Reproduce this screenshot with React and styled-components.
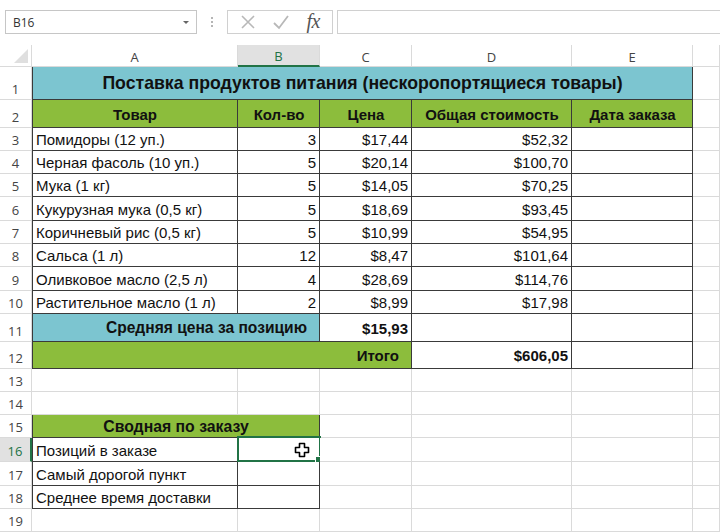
import React from "react";
import styled, { createGlobalStyle } from "styled-components";

const GlobalStyle = createGlobalStyle`
  html, body {
    margin: 0;
    padding: 0;
    background: #fff;
    overflow: hidden;
  }
  * {
    box-sizing: border-box;
  }
`;

const Page = styled.div`
  width: 720px;
  height: 532px;
  background: #fff;
  overflow: hidden;
  font-family: "Liberation Sans", Arial, sans-serif;
`;

const Toolbar = styled.div`
  height: 45px;
  display: flex;
  align-items: flex-start;
  padding: 10px 0 0 5px;
`;

const NameBox = styled.div`
  width: 192px;
  height: 24px;
  border: 1px solid #c6c6c6;
  display: flex;
  align-items: center;
  justify-content: space-between;
  padding: 0 7px 0 7px;
  font-family: "Open Sans", "Noto Sans", sans-serif;
  font-size: 12px;
  color: #333;
`;

const Caret = styled.span`
  width: 0;
  height: 0;
  border-left: 3px solid transparent;
  border-right: 3px solid transparent;
  border-top: 3px solid #666;
  margin-top: 1px;
`;

const Grip = styled.div`
  width: 30px;
  height: 24px;
  display: flex;
  flex-direction: column;
  align-items: center;
  justify-content: center;
  gap: 2px;
  & span {
    width: 2px;
    height: 2px;
    background: #b5b5b5;
  }
`;

const FxButtons = styled.div`
  width: 106px;
  height: 24px;
  border: 1px solid #d0d0d0;
  display: flex;
  align-items: center;
  justify-content: space-around;
  padding: 0 4px;
  color: #b4b4b4;
`;

const FxLabel = styled.span`
  font-family: "Liberation Serif", "Times New Roman", serif;
  font-style: italic;
  font-size: 20px;
  line-height: 20px;
  color: #555;
  letter-spacing: -0.5px;
  margin-top: -2px;
`;

const FormulaInput = styled.div`
  flex: 1;
  height: 24px;
  margin-left: 4px;
  border-top: 1px solid #d0d0d0;
  border-bottom: 1px solid #d0d0d0;
  border-left: 1px solid #d0d0d0;
`;

const Sheet = styled.div`
  display: grid;
  grid-template-columns: 32px 206px 82px 92px 160px 121px 1fr;
  grid-template-rows:
    22px 33px 28px 23px 23px 23px 24px 23px 23px 24px 23px
    28px 27px 23px 23px 23px 24px 24px 23px 23px;
`;

const Corner = styled.div`
  border-right: 1px solid #dadada;
  border-bottom: 1px solid #dadada;
  position: relative;
  &::after {
    content: "";
    position: absolute;
    right: 3px;
    bottom: 3px;
    width: 0;
    height: 0;
    border-left: 14px solid transparent;
    border-bottom: 14px solid #dfdfdf;
  }
`;

const ColHead = styled.div`
  display: flex;
  align-items: center;
  justify-content: center;
  padding-top: 2px;
  font-family: "Open Sans", "Noto Sans", sans-serif;
  font-size: 13px;
  color: ${(p) => (p.$active ? "#217346" : "#444")};
  background: ${(p) => (p.$active ? "#e1e1e1" : "#fff")};
  border-right: 1px solid #dadada;
  border-bottom: ${(p) => (p.$active ? "2px solid #217346" : "1px solid #dadada")};
`;

const RowHead = styled.div`
  display: flex;
  align-items: flex-end;
  justify-content: center;
  padding-bottom: 1px;
  font-family: "Open Sans", "Noto Sans", sans-serif;
  font-size: 13px;
  color: ${(p) => (p.$active ? "#217346" : "#444")};
  background: ${(p) => (p.$active ? "#e1e1e1" : "#fff")};
  border-bottom: 1px solid #dadada;
  border-right: ${(p) => (p.$active ? "2px solid #217346" : "1px solid #dadada")};
`;

const DARK = "#3a3a3a";
const GRID = "#dadada";

const Cell = styled.div`
  position: relative;
  grid-column: span ${(p) => p.$span || 1};
  display: flex;
  align-items: center;
  justify-content: ${(p) =>
    p.$align === "right" ? "flex-end" : p.$align === "center" ? "center" : "flex-start"};
  padding: 1px ${(p) => p.$pr ?? 3}px 0 4px;
  font-size: ${(p) => p.$size || 15}px;
  font-weight: ${(p) => (p.$bold ? 700 : 400)};
  color: #111;
  white-space: nowrap;
  background: ${(p) => p.$bg || "#fff"};
  border-right: 1px solid ${(p) => (p.$br ? DARK : GRID)};
  border-bottom: 1px solid ${(p) => (p.$bb ? DARK : GRID)};
  box-shadow: ${(p) => (p.$bl ? `inset 1px 0 0 ${DARK}` : "none")};
`;

const Selection = styled.div`
  position: absolute;
  left: -1px;
  top: -2px;
  right: -2px;
  bottom: -1px;
  border: 2px solid #217346;
  pointer-events: none;
  &::after {
    content: "";
    position: absolute;
    right: -5px;
    bottom: -5px;
    width: 7px;
    height: 7px;
    background: #217346;
    border: 1px solid #fff;
  }
`;

const Cursor = styled.svg`
  position: absolute;
  left: 56px;
  top: 4px;
`;

const TEAL = "#7cc5d0";
const GREEN = "#8cbd3c";

const items = [
  ["Помидоры (12 уп.)", "3", "$17,44", "$52,32"],
  ["Черная фасоль (10 уп.)", "5", "$20,14", "$100,70"],
  ["Мука (1 кг)", "5", "$14,05", "$70,25"],
  ["Кукурузная мука (0,5 кг)", "5", "$18,69", "$93,45"],
  ["Коричневый рис (0,5 кг)", "5", "$10,99", "$54,95"],
  ["Сальса (1 л)", "12", "$8,47", "$101,64"],
  ["Оливковое масло (2,5 л)", "4", "$28,69", "$114,76"],
  ["Растительное масло (1 л)", "2", "$8,99", "$17,98"],
];

const heads = ["Товар", "Кол-во", "Цена", "Общая стоимость", "Дата заказа"];

const summary = ["Позиций в заказе", "Самый дорогой пункт", "Среднее время доставки"];

function EmptyRow({ n }) {
  return (
    <>
      <RowHead>{n}</RowHead>
      <Cell />
      <Cell />
      <Cell />
      <Cell />
      <Cell />
      <Cell />
    </>
  );
}

export default function App() {
  return (
    <Page>
      <GlobalStyle />
      <Toolbar>
        <NameBox>
          B16
          <Caret />
        </NameBox>
        <Grip>
          <span />
          <span />
          <span />
        </Grip>
        <FxButtons>
          <svg width="16" height="16" viewBox="0 0 16 16">
            <path d="M2 2 L14 14 M14 2 L2 14" stroke="#b8b8b8" strokeWidth="1.6" fill="none" />
          </svg>
          <svg width="18" height="16" viewBox="0 0 18 16">
            <path d="M2 9 L7 14 L16 2" stroke="#b8b8b8" strokeWidth="1.8" fill="none" />
          </svg>
          <FxLabel>fx</FxLabel>
        </FxButtons>
        <FormulaInput />
      </Toolbar>

      <Sheet>
        <Corner />
        <ColHead>A</ColHead>
        <ColHead $active>B</ColHead>
        <ColHead>C</ColHead>
        <ColHead>D</ColHead>
        <ColHead>E</ColHead>
        <ColHead />

        <RowHead>1</RowHead>
        <Cell $span={5} $bg={TEAL} $bold $size={17.7} $align="center" $bb $br $bl>
          Поставка продуктов питания (нескоропортящиеся товары)
        </Cell>
        <Cell />

        <RowHead>2</RowHead>
        {heads.map((h, i) => (
          <Cell key={h} $bg={GREEN} $bold $align="center" $bb $br $bl={i === 0}>
            {h}
          </Cell>
        ))}
        <Cell />

        {items.map((row, i) => (
          <React.Fragment key={row[0]}>
            <RowHead>{i + 3}</RowHead>
            <Cell $bb $br $bl>{row[0]}</Cell>
            <Cell $bb $br $align="right">{row[1]}</Cell>
            <Cell $bb $br $align="right">{row[2]}</Cell>
            <Cell $bb $br $align="right">{row[3]}</Cell>
            <Cell $bb $br />
            <Cell />
          </React.Fragment>
        ))}

        <RowHead>11</RowHead>
        <Cell $span={2} $bg={TEAL} $bold $size={15.6} $align="right" $pr={12} $bb $br $bl>
          Средняя цена за позицию
        </Cell>
        <Cell $bold $align="right" $bb $br>$15,93</Cell>
        <Cell $bb $br />
        <Cell $bb $br />
        <Cell />

        <RowHead>12</RowHead>
        <Cell $span={3} $bg={GREEN} $bold $align="right" $pr={12} $bb $br $bl>
          Итого
        </Cell>
        <Cell $bold $align="right" $bb $br>$606,05</Cell>
        <Cell $bb $br />
        <Cell />

        <EmptyRow n={13} />
        <EmptyRow n={14} />

        <RowHead>15</RowHead>
        <Cell $span={2} $bg={GREEN} $bold $size={15.8} $align="center" $bb $br $bl>
          Сводная по заказу
        </Cell>
        <Cell />
        <Cell />
        <Cell />
        <Cell />

        {summary.map((s, i) => (
          <React.Fragment key={s}>
            <RowHead $active={i === 0}>{i + 16}</RowHead>
            <Cell $bb $br $bl>{s}</Cell>
            <Cell $bb $br>
              {i === 0 && (
                <>
                  <Selection />
                  <Cursor width="16" height="16" viewBox="0 0 16 16">
                    <path
                      d="M5.5 1.5 H10.5 V5.5 H14.5 V10.5 H10.5 V14.5 H5.5 V10.5 H1.5 V5.5 H5.5 Z"
                      fill="#fff"
                      stroke="#000"
                      strokeWidth="1.6"
                      strokeLinejoin="round"
                    />
                  </Cursor>
                </>
              )}
            </Cell>
            <Cell />
            <Cell />
            <Cell />
            <Cell />
          </React.Fragment>
        ))}

        <EmptyRow n={19} />
      </Sheet>
    </Page>
  );
}
